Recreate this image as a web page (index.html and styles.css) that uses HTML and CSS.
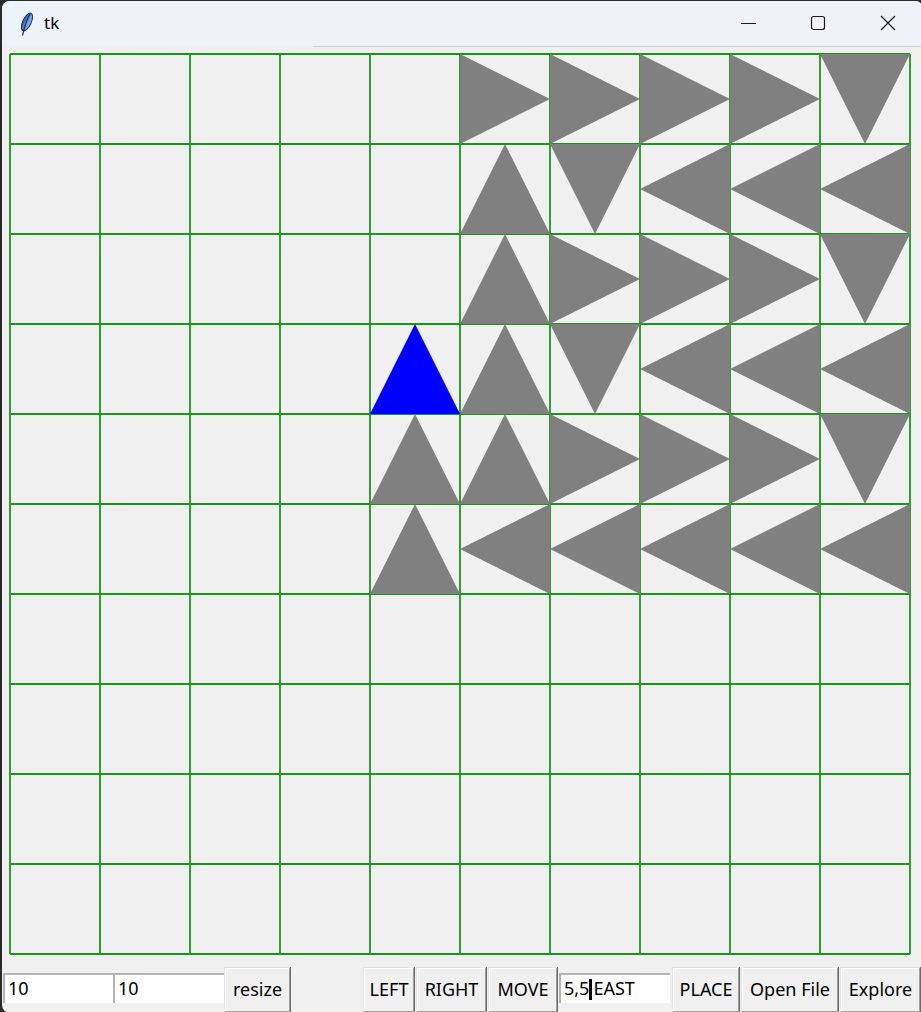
FILE: index.html
```html
<!DOCTYPE html>
<html lang="en">
<head>
    <meta charset="UTF-8">
    <meta name="viewport" content="width=device-width, initial-scale=1.0">
    <title>tk</title>
    <link rel="stylesheet" href="styles.css">
</head>
<body>
    <div class="window">
        <div class="titlebar">
            <svg class="app-icon" width="16" height="24" viewBox="0 0 16 24">
                <defs>
                    <linearGradient id="feather" x1="0" y1="0" x2="1" y2="0">
                        <stop offset="0" stop-color="#2c5db0"/>
                        <stop offset="0.55" stop-color="#5d93e0"/>
                        <stop offset="1" stop-color="#9cc2f0"/>
                    </linearGradient>
                </defs>
                <ellipse cx="9" cy="10" rx="4.2" ry="9.6" transform="rotate(25 9 10)" fill="url(#feather)" stroke="#1c2f57" stroke-width="1"/>
                <path d="M4.5 23.5 L6 17.5 C7.5 12 9.5 6 12 2" fill="none" stroke="#1c2f57" stroke-width="1.2"/>
            </svg>
            <span class="title">tk</span>
            <div class="caption">
                <span class="cap-btn"><svg width="16" height="16" viewBox="0 0 16 16"><path d="M1 8.5H16" stroke="#1b1b1b" stroke-width="1"/></svg></span>
                <span class="cap-btn"><svg width="16" height="16" viewBox="0 0 16 16"><rect x="1.5" y="1.5" width="13" height="13" rx="2" fill="none" stroke="#1b1b1b" stroke-width="1.2"/></svg></span>
                <span class="cap-btn"><svg width="16" height="16" viewBox="0 0 16 16"><path d="M1 1L15 15M15 1L1 15" stroke="#1b1b1b" stroke-width="1.2"/></svg></span>
            </div>
        </div>
        <div class="title-rule"></div>

        <svg class="board" width="921" height="920" viewBox="2 47 921 920">
            <defs>
                <polygon id="r" points="0,0 90,45 0,90"/>
                <polygon id="l" points="90,0 0,45 90,90"/>
                <polygon id="u" points="45,0 90,90 0,90"/>
                <polygon id="d" points="0,0 90,0 45,90"/>
            </defs>
            <path class="grid" d="M10 54V954M100 54V954M190 54V954M280 54V954M370 54V954M460 54V954M550 54V954M640 54V954M730 54V954M820 54V954M910 54V954
                M10 54H910M10 144H910M10 234H910M10 324H910M10 414H910M10 504H910M10 594H910M10 684H910M10 774H910M10 864H910M10 954H910"/>
            <g fill="#808080">
                <!-- row 0 -->
                <use href="#r" x="460" y="54"/>
                <use href="#r" x="550" y="54"/>
                <use href="#r" x="640" y="54"/>
                <use href="#r" x="730" y="54"/>
                <use href="#d" x="820" y="54"/>
                <!-- row 1 -->
                <use href="#u" x="460" y="144"/>
                <use href="#d" x="550" y="144"/>
                <use href="#l" x="640" y="144"/>
                <use href="#l" x="730" y="144"/>
                <use href="#l" x="820" y="144"/>
                <!-- row 2 -->
                <use href="#u" x="460" y="234"/>
                <use href="#r" x="550" y="234"/>
                <use href="#r" x="640" y="234"/>
                <use href="#r" x="730" y="234"/>
                <use href="#d" x="820" y="234"/>
                <!-- row 3 -->
                <use href="#u" x="460" y="324"/>
                <use href="#d" x="550" y="324"/>
                <use href="#l" x="640" y="324"/>
                <use href="#l" x="730" y="324"/>
                <use href="#l" x="820" y="324"/>
                <!-- row 4 -->
                <use href="#u" x="370" y="414"/>
                <use href="#u" x="460" y="414"/>
                <use href="#r" x="550" y="414"/>
                <use href="#r" x="640" y="414"/>
                <use href="#r" x="730" y="414"/>
                <use href="#d" x="820" y="414"/>
                <!-- row 5 -->
                <use href="#u" x="370" y="504"/>
                <use href="#l" x="460" y="504"/>
                <use href="#l" x="550" y="504"/>
                <use href="#l" x="640" y="504"/>
                <use href="#l" x="730" y="504"/>
                <use href="#l" x="820" y="504"/>
            </g>
            <!-- robot -->
            <use href="#u" x="370" y="324" fill="#0000ff"/>
        </svg>

        <div class="controls">
            <div class="entry w-rows">10</div>
            <div class="entry w-cols">10</div>
            <button class="btn w-resize">resize</button>
            <button class="btn w-left">LEFT</button>
            <button class="btn w-right">RIGHT</button>
            <button class="btn w-move">MOVE</button>
            <div class="entry w-place">5,5<span class="caret"></span>EAST</div>
            <button class="btn w-placebtn">PLACE</button>
            <button class="btn w-open">Open File</button>
            <button class="btn w-explore">Explore</button>
        </div>
    </div>
</body>
</html>
```

FILE: styles.css
```css
body {
    margin: 0;
    padding: 0;
    background-color: #2b2b2b;
    overflow: hidden;
    font-family: "Noto Sans", "Open Sans", sans-serif;
}
.window {
    width: 921px;
    height: 1012px;
    margin: 1px 0 0 2px;
    background-color: #f0f0f0;
    border-radius: 8px 8px 0 8px;
    overflow: hidden;
}
.titlebar {
    height: 45px;
    display: flex;
    align-items: center;
    background-color: #eef3f9;
}
.app-icon {
    margin-left: 16px;
    margin-top: 1px;
}
.title {
    margin-left: 10px;
    margin-top: -2px;
    font-size: 17px;
    color: #000;
}
.caption {
    margin-left: auto;
    display: flex;
}
.cap-btn {
    width: 70px;
    height: 45px;
    display: flex;
    align-items: center;
    justify-content: center;
}
.cap-btn svg {
    margin-top: -2px;
}
.title-rule {
    height: 1px;
    margin-left: 311px;
    background-color: #d3d3d3;
}
.board {
    display: block;
}
.grid {
    fill: none;
    stroke: #1a971a;
    stroke-width: 1.8;
}
.controls {
    height: 45px;
    display: flex;
    align-items: flex-start;
}
.entry {
    box-sizing: border-box;
    height: 30px;
    margin-top: 6px;
    padding-left: 3px;
    background-color: #fff;
    border-top: 2px solid #b4b4b4;
    border-left: 2px solid #b4b4b4;
    font-size: 18px;
    line-height: 27px;
    color: #000;
    white-space: nowrap;
}
.caret {
    display: inline-block;
    width: 3px;
    height: 21px;
    margin: 0 1px 0 0;
    vertical-align: -5px;
    background-color: #000;
}
.btn {
    box-sizing: border-box;
    height: 46px;
    padding: 0 0 2px 0;
    border: none;
    background-color: #f0f0f0;
    box-shadow: inset -1px -1px #696969, inset 1px 1px #e3e3e3, inset -2px -2px #a0a0a0, inset 2px 2px #fff;
    font-family: "Noto Sans", "Open Sans", sans-serif;
    font-size: 18px;
    color: #000;
    text-align: center;
}
.w-rows { width: 110px; margin-left: 1px; }
.w-cols { width: 111px; }
.w-resize { width: 67px; }
.w-left { width: 52px; margin-left: 72px; }
.w-right { width: 71px; margin-left: 1px; }
.w-move { width: 70px; margin-left: 1px; }
.w-place { width: 111px; margin-left: 1px; }
.w-placebtn { width: 68px; margin-left: 2px; }
.w-open { width: 98px; margin-left: 1px; }
.w-explore { width: 81px; margin-left: 1px; }
```
